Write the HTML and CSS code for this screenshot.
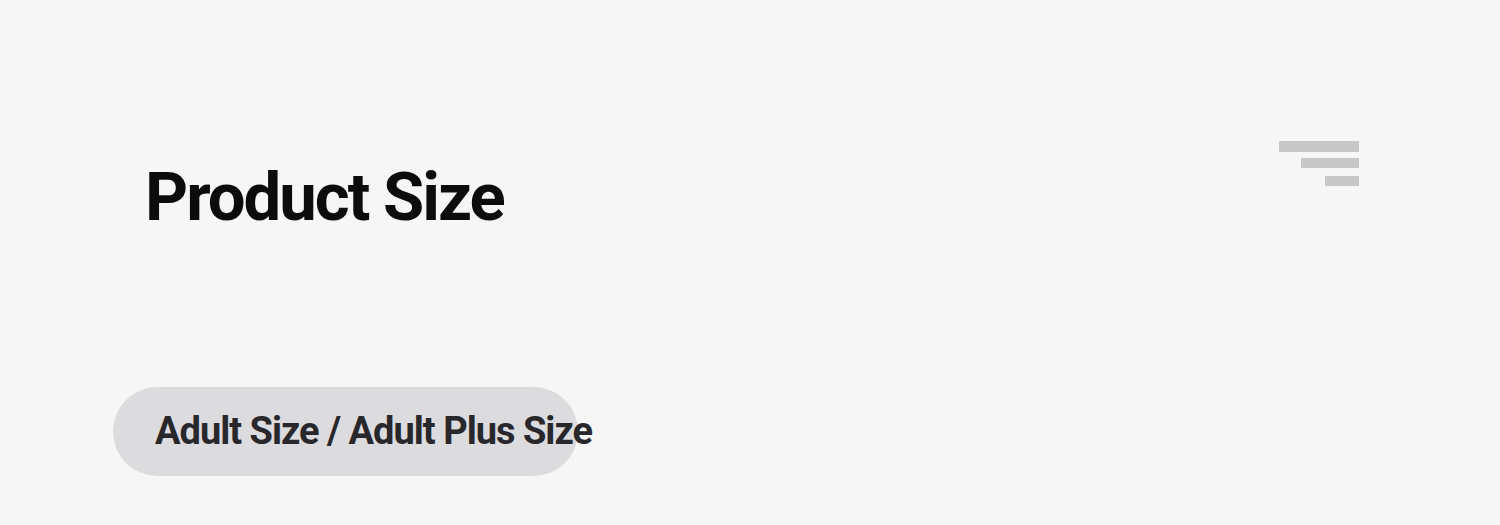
FILE: index.html
```html
<!DOCTYPE html>
<html lang="en">
<head>
    <meta charset="UTF-8">
    <meta name="viewport" content="width=device-width, initial-scale=1.0">
    <title>Product Size</title>
    <link rel="stylesheet" href="styles.css">
</head>
<body>

<div class="page">
    <div class="header">
        <h1 class="title">Product Size</h1>
        <button class="filter-btn" aria-label="Filter">
            <svg width="80" height="45" viewBox="0 0 80 45">
                <rect x="0" y="0" width="80" height="11" fill="#c8c8c8"/>
                <rect x="22" y="17" width="58" height="10" fill="#c8c8c8"/>
                <rect x="46" y="35" width="34" height="10" fill="#c8c8c8"/>
            </svg>
        </button>
    </div>

    <div class="size-list">
        <span class="size-pill">Adult Size / Adult Plus Size</span>
    </div>
</div>

</body>
</html>
```

FILE: styles.css
```css
body {
    font-family: Roboto, "Liberation Sans", sans-serif;
    background-color: #f6f6f6;
    margin: 0;
}
.page {
    padding: 141px 141px 0 113px;
}
.header {
    display: flex;
    justify-content: space-between;
    align-items: flex-start;
}
.title {
    margin: 23px 0 0 32px;
    font-size: 67px;
    line-height: 67px;
    font-weight: 700;
    letter-spacing: -2px;
    color: #0c0c0c;
}
.filter-btn {
    border: none;
    background: none;
    padding: 0;
    cursor: pointer;
    display: block;
}
.filter-btn svg {
    display: block;
}
.size-list {
    margin-top: 156px;
}
.size-pill {
    display: block;
    box-sizing: border-box;
    width: 465px;
    height: 89px;
    padding-left: 42px;
    border-radius: 45px;
    background-color: #dcdbde;
    color: #28272c;
    font-size: 38px;
    font-weight: 700;
    line-height: 89px;
    letter-spacing: -1px;
    white-space: nowrap;
}
```
